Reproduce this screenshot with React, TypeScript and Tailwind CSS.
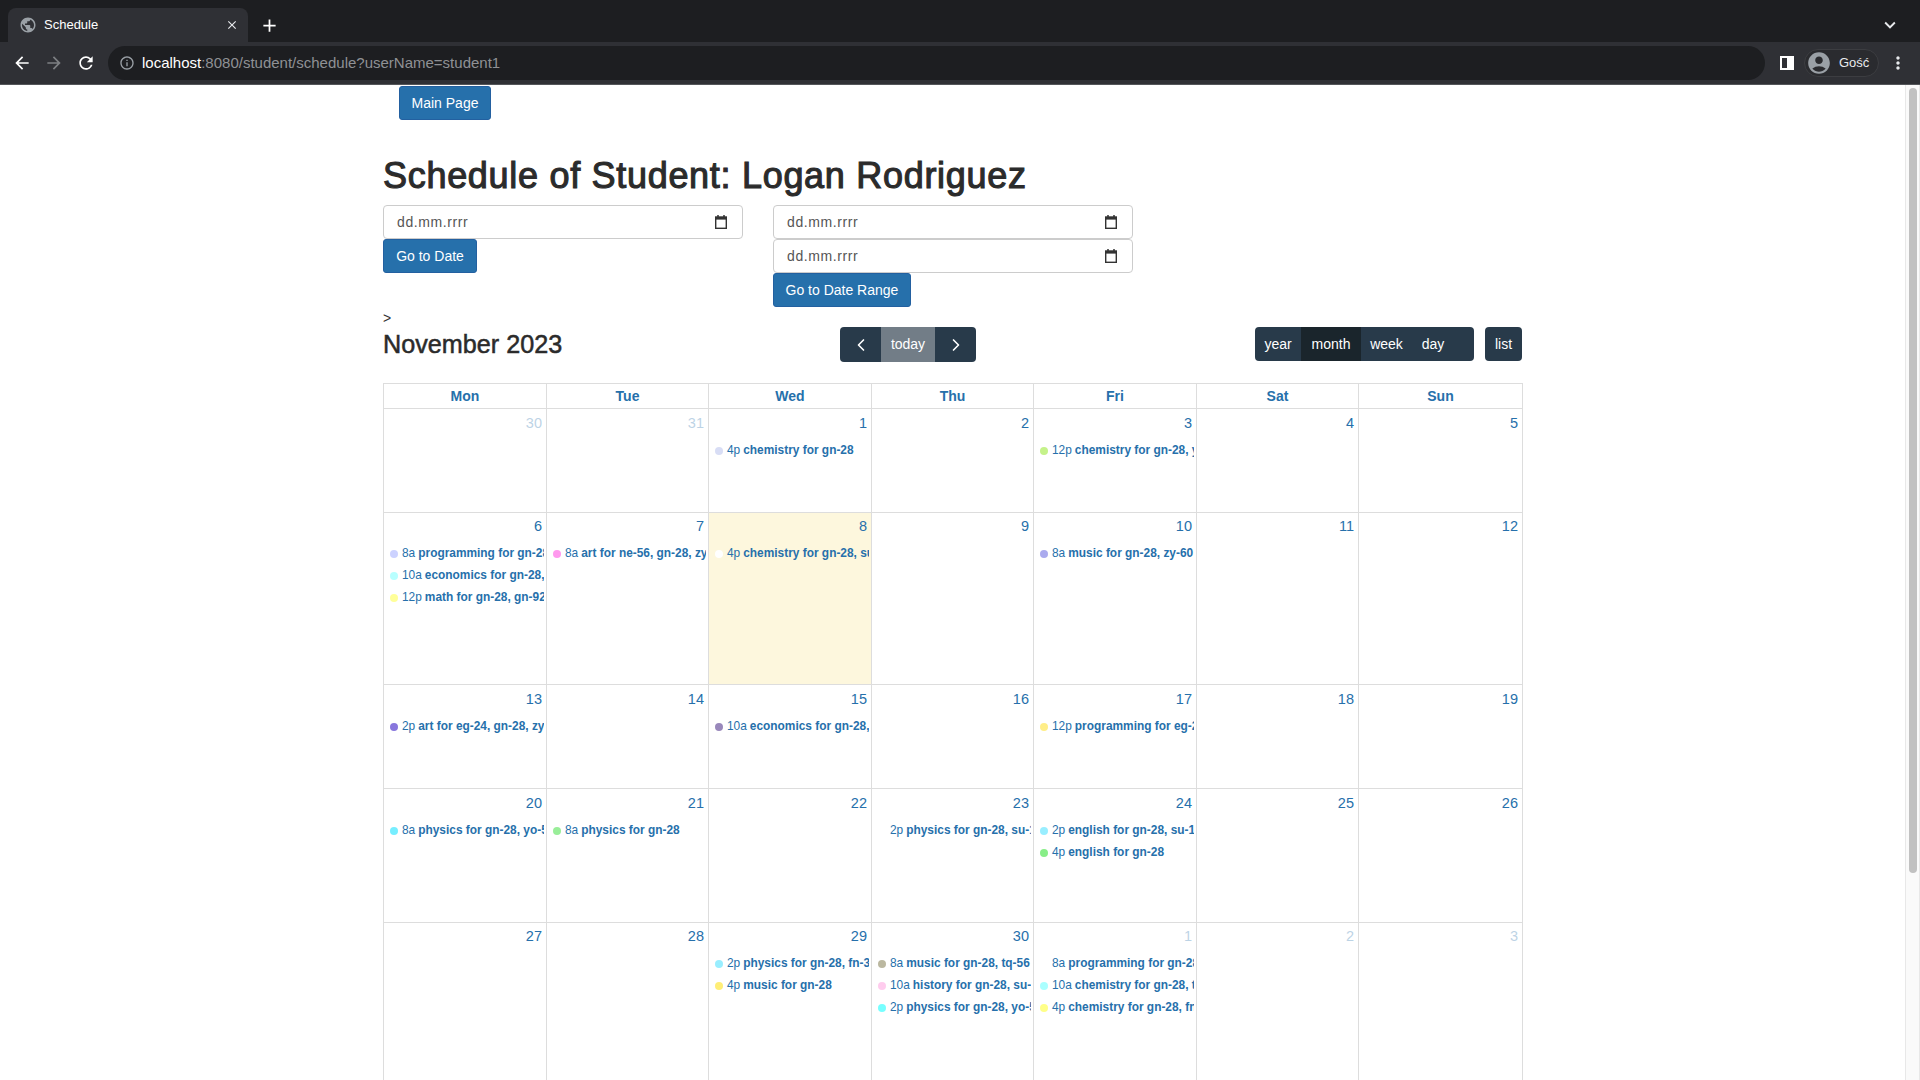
import React from "react";
import {
  MdAccountCircle,
  MdAdd,
  MdArrowBack,
  MdArrowForward,
  MdClose,
  MdExpandMore,
  MdInfoOutline,
  MdMoreVert,
  MdPublic,
  MdRefresh,
} from "react-icons/md";
import { LuChevronLeft, LuChevronRight } from "react-icons/lu";

type Ev = { dot: string; time: string; title: string };
type Day = { n: number; other?: boolean; today?: boolean; events?: Ev[] };

const weeks: { h: string; days: Day[] }[] = [
  {
    h: "h-[103.5px]",
    days: [
      { n: 30, other: true },
      { n: 31, other: true },
      { n: 1, events: [{ dot: "bg-[#d8ddf5]", time: "4p", title: "chemistry for gn-28" }] },
      { n: 2 },
      { n: 3, events: [{ dot: "bg-[#c5f28a]", time: "12p", title: "chemistry for gn-28, yo-51" }] },
      { n: 4 },
      { n: 5 },
    ],
  },
  {
    h: "h-[172.5px]",
    days: [
      {
        n: 6,
        events: [
          { dot: "bg-[#ccd2ff]", time: "8a", title: "programming for gn-28, su-14" },
          { dot: "bg-[#b8ffff]", time: "10a", title: "economics for gn-28, zy-60" },
          { dot: "bg-[#ffff99]", time: "12p", title: "math for gn-28, gn-92" },
        ],
      },
      { n: 7, events: [{ dot: "bg-[#ff99ee]", time: "8a", title: "art for ne-56, gn-28, zy-60" }] },
      { n: 8, today: true, events: [{ dot: "bg-white", time: "4p", title: "chemistry for gn-28, su-14" }] },
      { n: 9 },
      { n: 10, events: [{ dot: "bg-[#aaaaee]", time: "8a", title: "music for gn-28, zy-60" }] },
      { n: 11 },
      { n: 12 },
    ],
  },
  {
    h: "h-[104px]",
    days: [
      { n: 13, events: [{ dot: "bg-[#8877dd]", time: "2p", title: "art for eg-24, gn-28, zy-60" }] },
      { n: 14 },
      { n: 15, events: [{ dot: "bg-[#9988bb]", time: "10a", title: "economics for gn-28, su-14" }] },
      { n: 16 },
      { n: 17, events: [{ dot: "bg-[#ffee88]", time: "12p", title: "programming for eg-24, gn-28" }] },
      { n: 18 },
      { n: 19 },
    ],
  },
  {
    h: "h-[133.5px]",
    days: [
      { n: 20, events: [{ dot: "bg-[#77eeff]", time: "8a", title: "physics for gn-28, yo-51" }] },
      { n: 21, events: [{ dot: "bg-[#99ee99]", time: "8a", title: "physics for gn-28" }] },
      { n: 22 },
      { n: 23, events: [{ dot: "bg-white", time: "2p", title: "physics for gn-28, su-14" }] },
      {
        n: 24,
        events: [
          { dot: "bg-[#99eeff]", time: "2p", title: "english for gn-28, su-14" },
          { dot: "bg-[#88ee88]", time: "4p", title: "english for gn-28" },
        ],
      },
      { n: 25 },
      { n: 26 },
    ],
  },
  {
    h: "h-[170px]",
    days: [
      { n: 27 },
      { n: 28 },
      {
        n: 29,
        events: [
          { dot: "bg-[#99eeff]", time: "2p", title: "physics for gn-28, fn-33" },
          { dot: "bg-[#ffee77]", time: "4p", title: "music for gn-28" },
        ],
      },
      {
        n: 30,
        events: [
          { dot: "bg-[#bbb8a0]", time: "8a", title: "music for gn-28, tq-56" },
          { dot: "bg-[#ffccee]", time: "10a", title: "history for gn-28, su-14" },
          { dot: "bg-[#77ffff]", time: "2p", title: "physics for gn-28, yo-51" },
        ],
      },
      {
        n: 1,
        other: true,
        events: [
          { dot: "bg-white", time: "8a", title: "programming for gn-28, su-14" },
          { dot: "bg-[#aaffff]", time: "10a", title: "chemistry for gn-28, tq-56" },
          { dot: "bg-[#ffff88]", time: "4p", title: "chemistry for gn-28, fn-33" },
        ],
      },
      { n: 2, other: true },
      { n: 3, other: true },
    ],
  },
];

const dayNames = ["Mon", "Tue", "Wed", "Thu", "Fri", "Sat", "Sun"];

const DateField = () => (
  <div className="w-[360px] h-[34px] flex items-center justify-between pl-[13px] pr-[15px] bg-white border border-[#ccc] rounded-[4px] text-[14px] tracking-[0.6px] text-[#555]">
    <span>dd.mm.rrrr</span>
    <svg width="12" height="14" viewBox="0 0 12 14" className="text-[#333]">
      <path d="M3 0v2M9 0v2" stroke="currentColor" strokeWidth="1.5" />
      <rect x="0.7" y="2" width="10.6" height="11.3" fill="none" stroke="currentColor" strokeWidth="1.4" />
      <rect x="0.7" y="2" width="10.6" height="2.6" fill="currentColor" />
    </svg>
  </div>
);

const BlueButton = ({ label, className = "" }: { label: string; className?: string }) => (
  <button className={`h-[34px] px-[11.5px] bg-[#2670ab] text-white text-[14px] whitespace-nowrap rounded-[3px] border border-[#2360a0] ${className}`}>
    {label}
  </button>
);

const App = () => {
  return (
    <div className="w-[1920px] h-[1080px] overflow-hidden flex flex-col bg-white font-['Liberation_Sans',Arial,sans-serif]">
      {/* browser chrome */}
      <div className="h-[42px] shrink-0 bg-[#1d1e21] flex items-end pl-[8px] pr-[17px]">
        <div className="w-[240px] h-[34px] bg-[#2f3035] rounded-t-[8px] flex items-center pl-[11px] pr-[9px] text-white">
          <MdPublic size={18} className="text-[#9aa0a6]" />
          <span className="ml-[7px] text-[13px] flex-1">Schedule</span>
          <MdClose size={14} className="text-[#e8eaed]" />
        </div>
        <MdAdd size={21} className="text-white ml-[11px] mb-[6px]" />
        <MdExpandMore size={22} className="text-[#e8eaed] ml-auto mb-[6px] mr-[2px]" />
      </div>
      <div className="h-[43px] shrink-0 bg-[#2f3035] border-b border-[#54565a] flex items-center pl-[12px] pr-[5px]">
        <MdArrowBack size={20} className="text-white" />
        <MdArrowForward size={20} className="text-[#7d7f83] ml-[12px]" />
        <MdRefresh size={20} className="text-white ml-[12px]" />
        <div className="ml-[12px] w-[1657px] h-[34px] bg-[#1d1e21] rounded-[17px] flex items-center pl-[11px] text-[15px]">
          <MdInfoOutline size={16} className="text-[#9aa0a6]" />
          <span className="ml-[7px] text-white">localhost</span>
          <span className="text-[#8f9195]">:8080/student/schedule?userName=student1</span>
        </div>
        <div className="ml-[15px] w-[14px] h-[14px] border-2 border-white flex justify-end">
          <div className="w-[5px] h-full bg-white" />
        </div>
        <div className="ml-[10px] w-[75px] h-[28px] rounded-[14px] border border-[#3c3d41] bg-[#2a2b2f] flex items-center pl-[1px]">
          <MdAccountCircle size={26} className="text-[#9aa0a6]" />
          <span className="ml-[7px] text-[13px] text-[#e8eaed]">Gość</span>
        </div>
        <MdMoreVert size={20} className="text-[#e8eaed] ml-[9px]" />
      </div>

      {/* page + scrollbar */}
      <div className="flex-1 min-h-0 flex">
        <div className="flex-1 min-w-0 overflow-hidden">
          <div className="w-[1140px] ml-[383px]">
            <div className="pl-[16px] pt-[1px]">
              <BlueButton label="Main Page" className="w-[92px] block" />
            </div>
            <h1 className="mt-[33px] h-[46px] text-[36px] leading-[46px] tracking-[0.7px] text-[#2b2b2b] [-webkit-text-stroke:1.1px_#2b2b2b]">
              Schedule of Student: Logan Rodriguez
            </h1>
            <div className="mt-[6px] flex h-[102px]">
              <div className="w-[390px]">
                <DateField />
                <BlueButton label="Go to Date" className="block w-[94px]" />
              </div>
              <div>
                <DateField />
                <DateField />
                <BlueButton label="Go to Date Range" className="block" />
              </div>
            </div>
            <div className="mt-[4px] h-[14px] text-[14px] leading-[14px] text-[#333]">&gt;</div>
            <div className="mt-[2px] h-[36px] flex items-start">
              <h2 className="w-[457px] self-center text-[25.2px] text-[#2b2b2b] [-webkit-text-stroke:0.5px_#2b2b2b]">November 2023</h2>
              <div className="w-[136px] h-[35px] flex rounded-[4px] overflow-hidden text-white text-[14px] bg-[#283a4a]">
                <div className="w-[41px] flex items-center justify-center">
                  <LuChevronLeft size={20} />
                </div>
                <div className="w-[54px] flex items-center justify-center bg-[#727d87]">today</div>
                <div className="w-[41px] flex items-center justify-center">
                  <LuChevronRight size={20} />
                </div>
              </div>
              <div className="ml-[279px] w-[219px] h-[34px] flex rounded-[4px] overflow-hidden text-white text-[14px] bg-[#283a4a]">
                <div className="w-[46px] flex items-center justify-center">year</div>
                <div className="w-[60px] flex items-center justify-center bg-[#1a252c]">month</div>
                <div className="w-[51px] flex items-center justify-center">week</div>
                <div className="w-[42px] flex items-center justify-center">day</div>
              </div>
              <div className="ml-[11px] w-[37px] h-[34px] flex items-center justify-center rounded-[4px] text-white text-[14px] bg-[#283a4a]">
                list
              </div>
            </div>

            {/* calendar */}
            <div className="mt-[20px] border-t border-l border-[#ddd]">
              <div className="grid grid-cols-[163px_162px_163px_162px_163px_162px_164px] h-[25px]">
                {dayNames.map((d) => (
                  <div key={d} className="border-r border-b border-[#ddd] flex items-center justify-center text-[14px] font-bold text-[#2670ab]">
                    {d}
                  </div>
                ))}
              </div>
              {weeks.map((w, i) => (
                <div key={i} className={`grid grid-cols-[163px_162px_163px_162px_163px_162px_164px] ${w.h}`}>
                  {w.days.map((d, j) => (
                    <div key={j} className={`min-w-0 border-r border-b border-[#ddd] overflow-hidden ${d.today ? "bg-[#fdf7dd]" : ""}`}>
                      <div className={`h-[26px] pr-[4px] pt-[5.5px] text-right text-[14.5px] leading-[16px] text-[#2670ab] ${d.other ? "opacity-30" : ""}`}>
                        {d.n}
                      </div>
                      <div className="mt-[4.5px] pl-[2px] pr-[2px] flex flex-col">
                        {(d.events ?? []).map((e, k) => (
                          <div key={k} className="h-[22px] flex items-center overflow-hidden whitespace-nowrap text-[11.9px] text-[#2670ab]">
                            <span className={`w-[8px] h-[8px] mx-[4px] rounded-full shrink-0 ${e.dot}`} />
                            <span className="mr-[3px]">{e.time}</span>
                            <span className="font-bold">{e.title}</span>
                          </div>
                        ))}
                      </div>
                    </div>
                  ))}
                </div>
              ))}
            </div>
          </div>
        </div>
        <div className="w-[15px] shrink-0 bg-[#fafafa] border-x border-[#e8e8e8] pt-[3px] pl-[3px]">
          <div className="w-[8px] h-[785px] rounded-[4px] bg-[#c1c1c1]" />
        </div>
      </div>
    </div>
  );
};

export default App;
